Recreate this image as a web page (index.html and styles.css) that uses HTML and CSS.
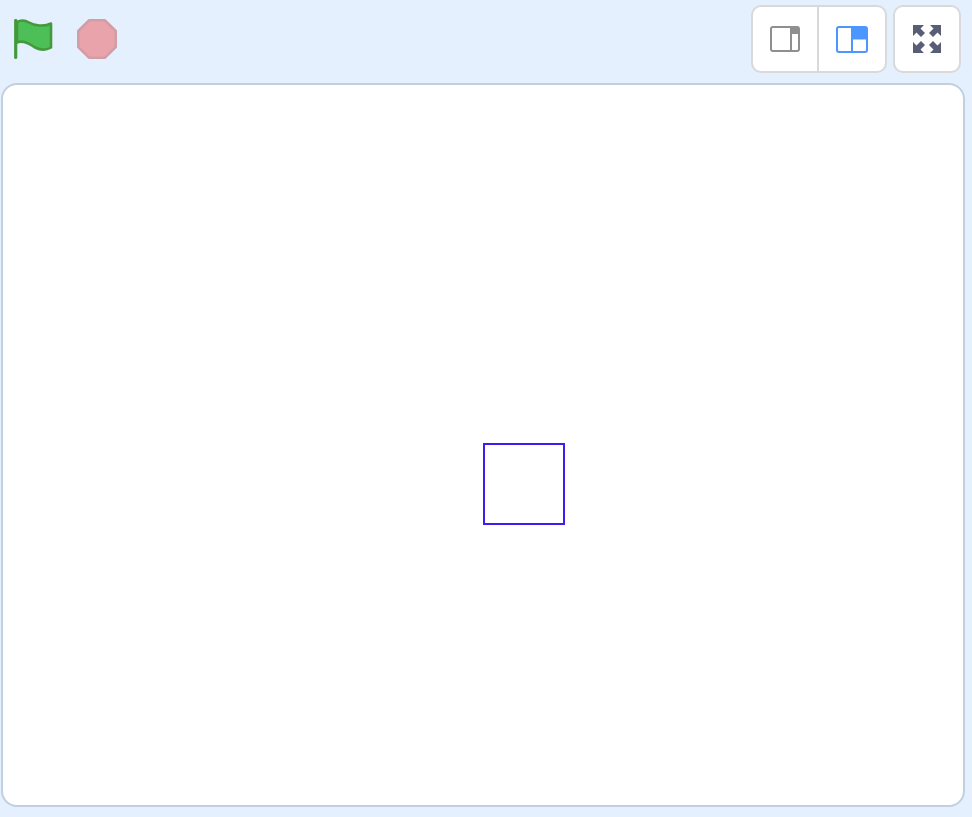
FILE: index.html

```html
<!DOCTYPE html>
<html lang="en">
<head>
    <meta charset="UTF-8">
    <title>Stage</title>
    <link rel="stylesheet" href="styles.css">
</head>
<body>
    <div class="toolbar">
        <div class="controls">
            <svg class="flag" width="40" height="42" viewBox="0 0 40 42">
                <path d="M3 2.800C7 0.800 11 1 15 3.500C20 6.500 30 8 37 4.500V28.500C31 32 26 31 21 28.500C15 24.500 9 21 3 23.500Z" fill="#4cbf56" stroke="#45993d" stroke-width="2.600" stroke-linejoin="round"/>
                <path d="M1.700 1.500V38.500" stroke="#45993d" stroke-width="3.200" stroke-linecap="round"/>
            </svg>
            <svg class="stop" width="40" height="40" viewBox="0 0 40 40">
                <polygon points="12,1.300 28,1.300 38.700,12 38.700,28 28,38.700 12,38.700 1.300,28 1.300,12" fill="#e9a4ab" stroke="#d39da6" stroke-width="2.600" stroke-linejoin="round"/>
            </svg>
        </div>
        <div class="view-buttons">
            <div class="btn-group">
                <div class="view-btn view-btn-small">
                    <svg width="30" height="26" viewBox="0 0 30 26">
                        <rect x="1" y="1" width="28" height="24" rx="2" fill="#fff" stroke="#8f8f8f" stroke-width="2"/>
                        <path d="M21 1H27A2 2 0 0 1 29 3V8H21Z" fill="#8f8f8f"/>
                        <path d="M21 1V25" stroke="#8f8f8f" stroke-width="2"/>
                    </svg>
                </div>
                <div class="view-btn view-btn-large">
                    <svg width="32" height="27" viewBox="0 0 32 27">
                        <rect x="1" y="1" width="30" height="25" rx="2" fill="#fff" stroke="#4c97ff" stroke-width="2"/>
                        <path d="M16 1H29A2 2 0 0 1 31 3V13.500H16Z" fill="#4c97ff"/>
                        <path d="M16 1V26" stroke="#4c97ff" stroke-width="2"/>
                    </svg>
                </div>
            </div>
            <div class="btn-single">
                <svg width="28" height="28" viewBox="0 0 28 28">
                    <g fill="#575e75">
                        <path d="M0 0H11L7.500 3.500L12 8L8 12L3.500 7.500L0 11Z"/>
                        <path d="M28 0V11L24.500 7.500L20 12L16 8L20.500 3.500L17 0Z"/>
                        <path d="M0 28V17L3.500 20.500L8 16L12 20L7.500 24.500L11 28Z"/>
                        <path d="M28 28H17L20.500 24.500L16 20L20 16L24.500 20.500L28 17Z"/>
                    </g>
                </svg>
            </div>
        </div>
    </div>

    <div class="stage">
        <div class="sprite"></div>
    </div>
</body>
</html>
```

FILE: styles.css

```css
* {
    margin: 0;
    padding: 0;
    box-sizing: border-box;
}

body {
    background: #e5f0ff;
    height: 817px;
    overflow: hidden;
}

.toolbar {
    display: flex;
    justify-content: space-between;
    height: 83px;
    padding: 5px 11px 0 14px;
}

.controls {
    display: flex;
    gap: 23px;
    padding-top: 14px;
}

.flag,
.stop {
    display: block;
}

.view-buttons {
    display: flex;
    gap: 6px;
}

.btn-group,
.btn-single {
    display: flex;
    height: 68px;
    background: white;
    border: 2px solid #d9d9d9;
    border-radius: 10px;
}

.btn-group {
    width: 136px;
}

.btn-single {
    width: 68px;
    align-items: center;
    justify-content: center;
}

.view-btn {
    display: flex;
    align-items: center;
    justify-content: center;
}

.view-btn-small {
    width: 64px;
}

.view-btn-large {
    flex: 1;
    padding-top: 1px;
    border-left: 2px solid #d9d9d9;
}

.view-btn svg,
.btn-single svg {
    display: block;
}

.stage {
    position: relative;
    width: 964px;
    height: 724px;
    margin-left: 1px;
    background: white;
    border: 2px solid #c1cfe0;
    border-radius: 16px;
}

.sprite {
    position: absolute;
    left: 480px;
    top: 358px;
    width: 82px;
    height: 82px;
    border: 2px solid #3d1cf0;
}
```
